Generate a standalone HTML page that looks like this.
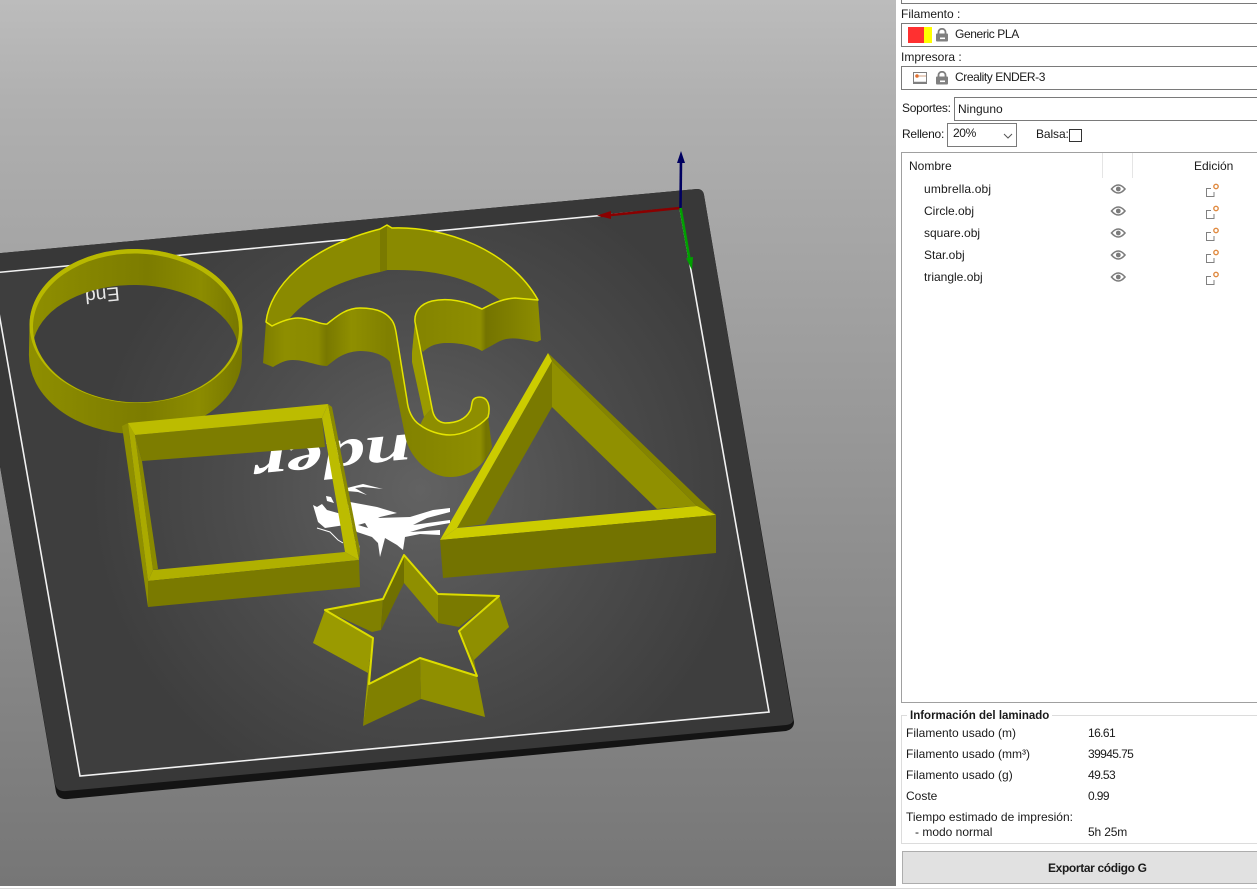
<!DOCTYPE html>
<html><head><meta charset="utf-8"><title>PrusaSlicer</title>
<style>
html,body{margin:0;padding:0;width:1257px;height:891px;overflow:hidden;background:#fff;font-family:"Liberation Sans",sans-serif;font-size:12px;color:#1a1a1a}
#v{position:absolute;left:0;top:0;width:896px;height:886px;background:linear-gradient(180deg,#bcbcbc 0,#b0b0b0 100px,#767676 886px)}
svg.s{position:absolute;left:0;top:0}
.t{position:absolute;white-space:nowrap;line-height:14px}
.n{letter-spacing:-.6px}
.m{letter-spacing:-.38px}
.b{position:absolute;box-sizing:border-box;border:1px solid #7a7a7a;background:#fff}
.i{position:absolute}
</style></head><body>
<div id="v"></div>
<svg class="s" width="896" height="886" viewBox="0 0 896 886">
<defs>
<radialGradient id="bed" gradientUnits="userSpaceOnUse" cx="420" cy="490" r="330">
<stop offset="0" stop-color="#626262"/><stop offset=".55" stop-color="#4c4c4c"/><stop offset="1" stop-color="#3e3e3e"/></radialGradient>
<linearGradient id="cw" x1="0" x2="1" y1="0" y2="0">
<stop offset="0" stop-color="#8f8f00"/><stop offset=".3" stop-color="#848400"/><stop offset=".55" stop-color="#7c7c00"/><stop offset=".8" stop-color="#8c8c00"/><stop offset="1" stop-color="#767600"/></linearGradient>
<linearGradient id="uw" gradientUnits="userSpaceOnUse" x1="262" x2="542" y1="0" y2="0">
<stop offset="0" stop-color="#7c7c00"/><stop offset=".08" stop-color="#8e8e00"/><stop offset=".2" stop-color="#8a8a00"/><stop offset=".23" stop-color="#787800"/><stop offset=".32" stop-color="#8f8f00"/><stop offset=".45" stop-color="#808000"/><stop offset=".6" stop-color="#868600"/><stop offset=".78" stop-color="#8e8e00"/><stop offset=".8" stop-color="#747400"/><stop offset="1" stop-color="#8e8e00"/></linearGradient>
<clipPath id="lc"><rect x="200" y="400" width="209" height="120"/></clipPath>
</defs>
<!-- bed -->
<path d="M-20 255 L697 189 Q703 189 704 195 L794 722 Q794 729 786 731 L68 799 Q58 800 56 792 L-20 350Z" fill="#141414"/>
<path d="M-20 255 L697 189 Q703 189 704 195 L793 720 Q793 724 786 725 L66 791 Q57 792 55 784 L-20 350Z" fill="#383838"/>
<path d="M-8 273 L680 208 L769 712 L80 776 Z" fill="url(#bed)"/>
<path d="M-8 273 L680 208 L769 712 L80 776 Z" fill="none" stroke="#f2f2f2" stroke-width="1.6"/>
<!-- logo -->
<g clip-path="url(#lc)"><text transform="translate(252 449) rotate(174.6) scale(1.55 1)" text-anchor="end" font-family="Liberation Serif" font-weight="700" font-style="italic" font-size="54" fill="#fff">Ender</text></g>
<text transform="translate(119 287) rotate(174.6)" font-family="Liberation Sans" font-size="19.5" fill="#e8e8e8">End</text>
<polygon points="313,505 317,507 322,504 327,510 345,515 345,525 325,528 318,522" fill="#fff"/>
<polygon points="326,496 331,497 334,503 327,501" fill="#fff"/>
<path d="M350 502 L377 507 L397 513 L380 517 L378 518 L410 517 L433 510 L450 508 L450 512 L427 518 L413 525 L450 520 L450 523 L427 527 L410 532 L440 530 L440 535 L420 534 L405 537 L403 550 L397 545 L385 538 L380 557 L378 543 L372 537 L357 532 L340 513Z M358 525 L365 523 L368 528Z" fill="#fff" fill-rule="evenodd"/>
<polygon points="347,488 363,484 383,489 363,487 355,488 367,495 358,492 347,491" fill="#fff"/>
<path d="M317 528 L330 532 L338 540 L343 543 M353 540 Q360 545 359 548" stroke="#fff" stroke-width="1" fill="none"/>
<!-- circle -->
<g transform="rotate(1.1 136 326)">
<path fill-rule="evenodd" fill="url(#cw)" d="M29.500 326 A106.500 77 0 0 1 242.500 326 L242.500 356 A106.500 78 0 0 1 29.500 356 Z M34.400 340 A103 74.500 0 0 0 237.600 340 A103 65.800 0 0 0 34.400 340 Z"/>
<path fill-rule="evenodd" fill="#b8b800" d="M29.500 326 A106.500 77 0 0 1 242.500 326 A106.500 77 0 0 1 29.500 326 Z M33 328 A103 74.500 0 0 0 239 328 A103 74.500 0 0 0 33 328 Z"/>
</g>
<!-- umbrella -->
<path fill="#8a8a00" d="M266 322 C270 288 305 248 380 229 L387 225 L392 228 C445 226 510 250 538 300 L515 298 L500 300 C475 280 440 270 397 270 L387 270 L380 272 C340 280 310 295 290 318 L272 326Z"/>
<path fill="#7a7a00" d="M380 229 L387 225 L387 270 L380 272Z"/>
<path fill="url(#uw)" d="M266 322 L263 363 L273 367 C280 363 285 360 293 360 C305 360 318 366 327 366 C335 360 342 352 360 351 C375 351 385 356 390 362 L405 435 C408 455 428 477 450 477 C470 477 485 465 492 447 L488 417 C478 428 462 435 450 435 C440 435 428 431 420 425 C412 420 408 410 407 400 L396 332 C395 327 394 322 390 318 C385 312 375 308 360 308 C345 308 335 318 327 324 C320 325 310 318 298 318 C290 318 280 322 272 326Z"/>
<path fill="url(#uw)" d="M415 322 L412 353 L420 347 L423 352 C428 347 435 343 447 343 C465 343 475 347 482 351 L498 342 C510 335 525 340 537 342 L541 340 L538 300 L515 298 C500 299 490 305 482 309 L470 304 C458 300 445 298 432 301 C420 304 414 312 415 322Z"/>
<polygon points="415,322 412,353 412,362 424,417 432,408 420,347" fill="#9a9a00"/>
<path fill="#8e8e00" d="M424 417 L432 408 C433 415 436 422 445 423 C455 423 465 420 470 411 C472 408 471 404 473 400 C476 396 484 396 487 401 C489 404 490 410 488 417 C478 428 462 435 450 435 C440 435 428 431 420 425Z"/>
<path fill="none" stroke="#e4e400" stroke-width="1.500" stroke-linejoin="round" d="M272 326 C280 322 290 318 298 318 C310 318 320 325 327 324 C335 318 345 308 360 308 C375 308 385 312 390 318 C394 322 395 327 396 332 L407 400 C408 410 412 420 420 425 C428 431 440 435 450 435 C462 435 478 428 488 417 C490 410 489 404 487 401 C484 396 476 396 473 400 C471 404 472 408 470 411 C465 420 455 423 445 423 C436 422 433 415 432 408 L420 347 L415 322 C414 312 420 304 432 301 C445 298 458 300 470 304 L482 309 C490 305 500 299 515 298 L538 300 C510 250 445 226 392 228 L387 225 L380 229 C305 248 270 288 266 322 Z"/>
<!-- triangle -->
<polygon points="552,361 457,528 485,524 552,407" fill="#7a7a00"/>
<polygon points="552,361 697,506 657,509 552,407" fill="#909000"/>
<polygon points="548,353 716,515 697,506 552,361" fill="#848400"/>
<polygon points="548,353 552,361 457,528 440,540" fill="#cccc00"/>
<polygon points="440,540 716,515 697,506 457,528" fill="#cccc00"/>
<polygon points="440,540 716,515 716,553 443,578" fill="#737300"/>
<!-- square -->
<polygon points="135,435 322,418 325,447 142,461" fill="#7d7d00"/>
<polygon points="135,435 142,461 158,569 153,570" fill="#8a8a00"/>
<polygon points="122,426 128,423 148,581 148,607" fill="#8f8f00"/>
<polygon points="128,423 135,435 153,570 148,581" fill="#aaaa00"/>
<polygon points="128,423 328,404 322,418 135,435" fill="#bcbc00"/>
<polygon points="328,404 359,560 345,552 322,418" fill="#bcbc00"/>
<polygon points="328,404 332,407 360,550 359,560" fill="#8a8a00"/>
<polygon points="148,581 359,560 345,552 153,570" fill="#b0b000"/>
<polygon points="148,581 359,560 360,587 148,607" fill="#7a7a00"/>
<!-- star -->
<polygon points="325,610 383,599 381,630 372,632" fill="#808000"/>
<polygon points="404,555 383,599 381,630 404,583" fill="#707000"/>
<polygon points="404,555 438,594 438,623 404,583" fill="#8f8f00"/>
<polygon points="438,594 499,596 459,627 438,623" fill="#7a7a00"/>
<polygon points="325,610 373,638 368,673 313,643" fill="#9a9a00"/>
<polygon points="369,684 420,658 421,699 363,726" fill="#808000"/>
<polygon points="369,684 373,640 368,673 363,726" fill="#a0a000"/>
<polygon points="420,658 477,676 485,717 421,699" fill="#8f8f00"/>
<polygon points="499,596 459,631 474,660 509,627" fill="#8f8f00"/>
<polygon points="459,631 477,676 474,660" fill="#8a8a00"/>
<polygon points="404,555 438,594 499,596 459,631 477,676 420,658 369,684 373,638 325,610 383,599" fill="none" stroke="#dcdc00" stroke-width="2" stroke-linejoin="round"/>
<!-- gizmo -->
<path d="M680 208 L601 216" stroke="#8a0000" stroke-width="2.500"/>
<path d="M597 215.500 L611 211 L611 219Z" fill="#8a0000"/>
<path d="M680.500 208 L681 158" stroke="#000060" stroke-width="2.600"/>
<path d="M681 151 L685 163 L677 163Z" fill="#000060"/>
<path d="M680.500 208 L690 262" stroke="#00a000" stroke-width="2.600"/>
<path d="M692 270 L686 258 L693 257Z" fill="#00a000"/>
</svg>

<!-- panel -->
<div class="b" style="left:901px;top:-20px;width:380px;height:24px"></div>
<div class="t" style="left:901px;top:7px">Filamento :</div>
<div class="b" style="left:901px;top:23px;width:380px;height:24px"></div>
<div class="i" style="left:908px;top:27px;width:16px;height:16px;background:#ff3030"></div>
<div class="i" style="left:924px;top:27px;width:8px;height:16px;background:#ffff00"></div>
<svg class="i" style="left:936px;top:28px" width="12" height="14" viewBox="0 0 12 14"><path d="M2.500 6V4a3.500 3.200 0 0 1 7 0V6" fill="none" stroke="#808080" stroke-width="1.800"/><rect x="0" y="5.500" width="12" height="8" rx="1" fill="#808080"/><rect x="4" y="9.500" width="5" height="1.600" fill="#fff"/></svg>
<div class="t m" style="left:955px;top:27px">Generic PLA</div>
<div class="t" style="left:901px;top:50px">Impresora :</div>
<div class="b" style="left:901px;top:66px;width:380px;height:24px"></div>
<svg class="i" style="left:913px;top:71px" width="14" height="14" viewBox="0 0 14 14"><rect x=".5" y="1.500" width="13" height="11" fill="#fff" stroke="#808080"/><path d="M1 11.500H13" stroke="#808080" stroke-width="1.500"/><circle cx="4" cy="5" r="1.800" fill="#e07030"/><path d="M6 5H13" stroke="#d0a080"/></svg>
<svg class="i" style="left:936px;top:71px" width="12" height="14" viewBox="0 0 12 14"><path d="M2.500 6V4a3.500 3.200 0 0 1 7 0V6" fill="none" stroke="#808080" stroke-width="1.800"/><rect x="0" y="5.500" width="12" height="8" rx="1" fill="#808080"/><rect x="4" y="9.500" width="5" height="1.600" fill="#fff"/></svg>
<div class="t" style="left:955px;top:70px;letter-spacing:-.42px">Creality ENDER-3</div>
<div class="t" style="left:902px;top:101px;letter-spacing:-.3px">Soportes:</div>
<div class="b" style="left:954px;top:97px;width:330px;height:24px"></div>
<div class="t" style="left:958px;top:102px">Ninguno</div>
<div class="t" style="left:902px;top:127px;letter-spacing:-.25px">Relleno:</div>
<div class="b" style="left:947px;top:123px;width:70px;height:24px"></div>
<div class="t m" style="left:953px;top:126px">20%</div>
<svg class="i" style="left:1003px;top:133px" width="10" height="6" viewBox="0 0 10 6"><path d="M1 1L5 5L9 1" fill="none" stroke="#555" stroke-width="1"/></svg>
<div class="t" style="left:1036px;top:127px;letter-spacing:-.1px">Balsa:</div>
<div class="b" style="left:1069px;top:129px;width:13px;height:13px;border-color:#333"></div>
<div class="b" style="left:901px;top:152px;width:380px;height:551px;border-color:#a0a0a0"></div>
<div class="i" style="left:1102px;top:153px;width:1px;height:25px;background:#e5e5e5"></div>
<div class="i" style="left:1132px;top:153px;width:1px;height:25px;background:#e5e5e5"></div>
<div class="t" style="left:909px;top:159px">Nombre</div>
<div class="t" style="left:1194px;top:159px">Edición</div>
<div class="t" style="left:924px;top:182px;letter-spacing:.15px">umbrella.obj</div>
<div class="t" style="left:924px;top:204px">Circle.obj</div>
<div class="t" style="left:924px;top:226px">square.obj</div>
<div class="t" style="left:924px;top:248px">Star.obj</div>
<div class="t" style="left:924px;top:270px">triangle.obj</div>
<svg class="i" style="left:1110px;top:180px" width="120" height="110" viewBox="0 0 120 110">
<defs>
<g id="e"><path d="M1.500 9C4 6 6.500 5 8.300 5S12.500 6 15 9C12.500 12 10 13 8.300 13S4 12 1.500 9Z" fill="none" stroke="#7c7c7c" stroke-width="1.600"/><circle cx="8.300" cy="9" r="2.400" fill="#7c7c7c"/></g>
<g id="p"><path d="M101 8.500H96.500V16.500H104V12" fill="none" stroke="#808080" stroke-width="1"/><circle cx="106" cy="6.500" r="2.200" fill="#fff" stroke="#e08a40" stroke-width="1.400"/></g>
</defs>
<use href="#e" y="0"/><use href="#p" y="0"/>
<use href="#e" y="22"/><use href="#p" y="22"/>
<use href="#e" y="44"/><use href="#p" y="44"/>
<use href="#e" y="66"/><use href="#p" y="66"/>
<use href="#e" y="88"/><use href="#p" y="88"/>
</svg>
<div class="b" style="left:901px;top:715px;width:380px;height:129px;border-color:#dcdcdc"></div>
<div class="t" style="left:907px;top:709px;background:#fff;padding:0 3px;font-weight:700;font-size:11.500px">Información del laminado</div>
<div class="t" style="left:906px;top:726px">Filamento usado (m)</div><div class="t n" style="left:1088px;top:726px">16.61</div>
<div class="t" style="left:906px;top:747px">Filamento usado (mm³)</div><div class="t n" style="left:1088px;top:747px">39945.75</div>
<div class="t" style="left:906px;top:768px">Filamento usado (g)</div><div class="t n" style="left:1088px;top:768px">49.53</div>
<div class="t" style="left:906px;top:789px">Coste</div><div class="t n" style="left:1088px;top:789px">0.99</div>
<div class="t" style="left:906px;top:810px">Tiempo estimado de impresión:</div>
<div class="t" style="left:915px;top:825px">- modo normal</div><div class="t" style="left:1088px;top:825px;letter-spacing:-.15px">5h 25m</div>
<div class="i" style="left:902px;top:851px;width:400px;height:33px;box-sizing:border-box;background:#e1e1e1;border:1px solid #adadad"></div>
<div class="t" style="left:1048px;top:861px;font-weight:700;letter-spacing:-.36px">Exportar código G</div>
<div class="i" style="left:0;top:886px;width:1257px;height:2px;background:#fff"></div>
<div class="i" style="left:0;top:888px;width:1257px;height:1px;background:#d8d8d8"></div>
</body></html>
